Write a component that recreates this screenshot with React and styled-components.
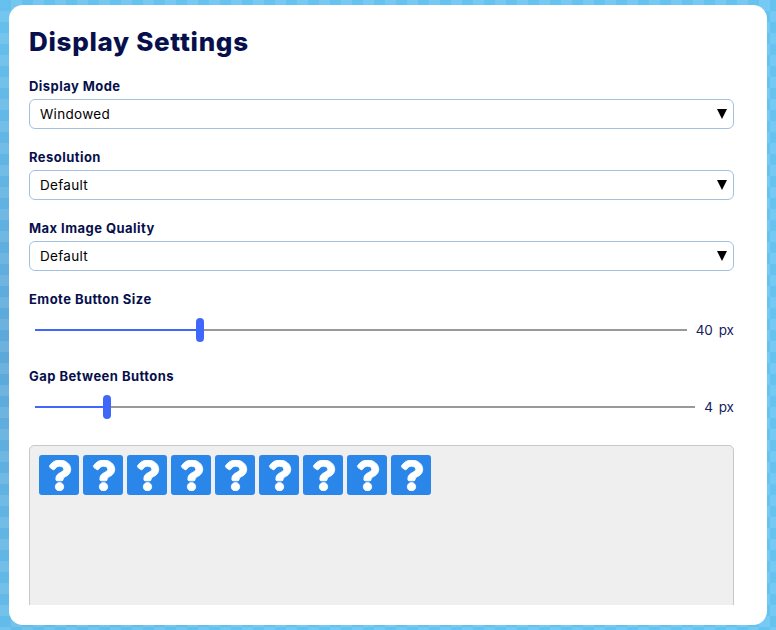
import React from "react";
import styled, { createGlobalStyle } from "styled-components";
import { FaQuestion } from "react-icons/fa";

const GlobalStyle = createGlobalStyle`
  html, body { margin: 0; padding: 0; height: 100%; }
  body {
    overflow: hidden;
    font-family: "Inter", "Liberation Sans", sans-serif;
    background-color: #66c3f0;
    background-image:
      repeating-conic-gradient(rgba(255,255,255,0.1) 0 25%, transparent 0 50%),
      radial-gradient(circle at 0 55%, rgba(70,110,170,0.32), transparent 45%);
    background-size: 22px 22px, 100% 100%;
  }
`;

const Page = styled.div`
  width: 776px;
  height: 630px;
  box-sizing: border-box;
  padding: 5px 9px;
`;

const Card = styled.div`
  height: 620px;
  box-sizing: border-box;
  background: #fff;
  border-radius: 14px;
  padding: 20px 33px 20px 20px;
`;

const Scroll = styled.div`
  height: 100%;
  overflow: hidden;
`;

const Title = styled.h1`
  margin: 0 0 19px;
  font-size: 26px;
  line-height: 34px;
  font-weight: 800;
  letter-spacing: 0.7px;
  color: #07104c;
`;

const Field = styled.div`
  margin-bottom: 20px;
`;

const Label = styled.div`
  font-size: 13px;
  line-height: 16px;
  font-weight: 700;
  letter-spacing: 0.45px;
  color: #07104c;
  margin-bottom: 5px;
`;

const Select = styled.div`
  height: 30px;
  box-sizing: border-box;
  display: flex;
  align-items: center;
  justify-content: space-between;
  padding: 0 6px 0 10px;
  border: 1px solid #a3c0e0;
  border-radius: 6px;
  font-size: 13.5px;
  letter-spacing: 0.3px;
  color: #000;
`;

const Arrow = styled.svg`
  width: 10px;
  height: 10px;
  fill: #000;
`;

const SliderRow = styled.div`
  display: flex;
  align-items: center;
  height: 36px;
  gap: 9px;
`;

const Track = styled.div`
  position: relative;
  flex: 1;
  height: 2px;
  margin-left: 6px;
  background: #999;
`;

const Fill = styled.div`
  height: 100%;
  background: #3f68fb;
`;

const Thumb = styled.div`
  position: absolute;
  top: -11px;
  width: 8px;
  height: 24px;
  margin-left: -4px;
  border-radius: 4px;
  background: #3f68fb;
`;

const Value = styled.div`
  font-size: 13.5px;
  color: #16205c;
  word-spacing: 2px;
  white-space: nowrap;
`;

const Preview = styled.div`
  height: 300px;
  box-sizing: border-box;
  padding: 9px;
  display: flex;
  gap: 4px;
  align-items: flex-start;
  background: #efefef;
  border: 1px solid #c8c8c8;
  border-radius: 5px;
`;

const Emote = styled.div`
  width: 40px;
  height: 40px;
  border-radius: 3px;
  background: #2a86e8;
  color: #fff;
  display: flex;
  align-items: center;
  justify-content: center;
  font-size: 31px;

  svg {
    stroke: #fff;
    stroke-width: 14;
  }
`;

const selects = [
  ["Display Mode", "Windowed"],
  ["Resolution", "Default"],
  ["Max Image Quality", "Default"],
];

const sliders = [
  ["Emote Button Size", "40 px", 25.25],
  ["Gap Between Buttons", "4 px", 10.9],
];

export default function App() {
  return (
    <Page>
      <GlobalStyle />
      <Card>
        <Scroll>
          <Title>Display Settings</Title>
          {selects.map(([label, value]) => (
            <Field key={label}>
              <Label>{label}</Label>
              <Select>
                {value}
                <Arrow viewBox="0 0 10 10"><path d="M0 0h10L5 10z" /></Arrow>
              </Select>
            </Field>
          ))}
          {sliders.map(([label, value, pct]) => (
            <Field key={label}>
              <Label>{label}</Label>
              <SliderRow>
                <Track>
                  <Fill style={{ width: `${pct}%` }} />
                  <Thumb style={{ left: `${pct}%` }} />
                </Track>
                <Value>{value}</Value>
              </SliderRow>
            </Field>
          ))}
          <Preview>
            {Array.from({ length: 9 }, (_, i) => <Emote key={i}><FaQuestion /></Emote>)}
          </Preview>
        </Scroll>
      </Card>
    </Page>
  );
}
